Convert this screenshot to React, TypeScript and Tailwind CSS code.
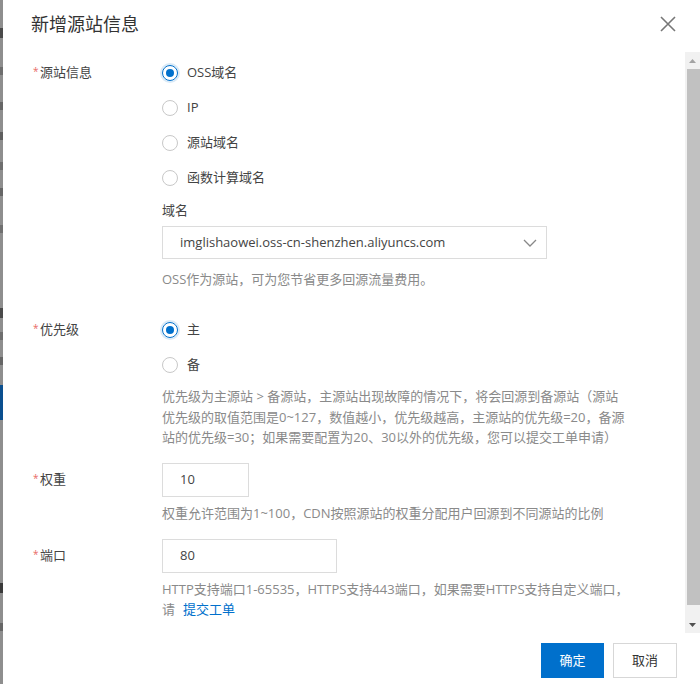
import React from "react";

function Req({ text }: { text: string }) {
  return (
    <span className="flex items-center text-[13px] text-[#333]">
      <span className="w-[7px] text-[10px] text-[#e86a66] leading-none -mt-[3px]">*</span>
      <span className="text-[#444]">{text}</span>
    </span>
  );
}

function Radio({ checked, label }: { checked?: boolean; label: string }) {
  return (
    <div className="h-[35px] flex items-center">
      {checked ? (
        <span className="w-[16px] h-[16px] rounded-full border border-[#0070cc] shadow-[0_0_0_2px_rgba(0,112,204,0.15)] flex items-center justify-center">
          <span className="w-[8px] h-[8px] rounded-full bg-[#0070cc]" />
        </span>
      ) : (
        <span className="w-[16px] h-[16px] rounded-full border border-[#c8c8c8] bg-white" />
      )}
      <span className="ml-[9px] text-[13px] text-[#444]">{label}</span>
    </div>
  );
}

function Mark({ cls }: { cls: string }) {
  return <div className={cls} />;
}

export default function App() {
  return (
    <div className="w-[700px] h-[684px] flex bg-white overflow-hidden font-['Open_Sans','Noto_Sans_CJK_SC',sans-serif]">
      {/* background page strip */}
      <div className="w-[3px] shrink-0 h-full bg-[#8e8e8e] flex flex-col">
        <Mark cls="mt-[28px] h-[10px] bg-[#4a4a4a]" />
        <Mark cls="mt-[29px] h-[8px] bg-[#6e6e6e]" />
        <Mark cls="mt-[27px] h-[8px] bg-[#666]" />
        <Mark cls="mt-[22px] h-[8px] bg-[#5e5e5e]" />
        <Mark cls="mt-[22px] h-[8px] bg-[#6e6e6e]" />
        <Mark cls="mt-[18px] h-[8px] bg-[#666]" />
        <Mark cls="mt-[29px] h-[8px] bg-[#707070]" />
        <Mark cls="mt-[75px] h-[10px] bg-[#4a4a4a]" />
        <Mark cls="mt-[14px] h-[8px] bg-[#6e6e6e]" />
        <Mark cls="mt-[17px] h-[8px] bg-[#666]" />
        <Mark cls="mt-[20px] h-[35px] bg-[#0b4f8f]" />
        <Mark cls="mt-[163px] h-[10px] bg-[#3a3a3a]" />
        <Mark cls="mt-[30px] h-[8px] bg-[#666]" />
      </div>

      {/* dialog */}
      <div className="flex-1 flex flex-col bg-white">
        {/* header */}
        <div className="h-[52px] shrink-0 flex items-center pl-[28px] pr-[24px]">
          <span className="text-[18px] text-[#333] leading-none -mt-[4px]">新增源站信息</span>
          <div className="flex-1" />
          <svg width="16" height="16" viewBox="0 0 16 16" className="-mt-[5px]">
            <path d="M1 1 L15 15 M15 1 L1 15" stroke="#777" strokeWidth="1.6" fill="none" />
          </svg>
        </div>

        {/* body */}
        <div className="h-[581px] shrink-0 flex">
          <div className="flex-1 overflow-hidden pl-[30px] pt-[3px]">
            {/* 源站信息 */}
            <div className="flex">
              <div className="w-[129px] shrink-0 h-[35px] flex items-center">
                <Req text="源站信息" />
              </div>
              <div className="flex flex-col">
                <Radio checked label="OSS域名" />
                <Radio label="IP" />
                <Radio label="源站域名" />
                <Radio label="函数计算域名" />
                <div className="mt-[5px] h-[20px] leading-[20px] text-[13px] text-[#444]">域名</div>
                <div className="mt-[6px] w-[385px] h-[33px] border border-[#dcdcdc] flex items-center pl-[17px] pr-[9px]">
                  <span className="flex-1 text-[13px] text-[#444]">imglishaowei.oss-cn-shenzhen.aliyuncs.com</span>
                  <svg width="14" height="8" viewBox="0 0 14 8">
                    <path d="M1 1 L7 7 L13 1" stroke="#888" strokeWidth="1.3" fill="none" />
                  </svg>
                </div>
                <div className="mt-[10px] h-[20px] leading-[20px] text-[13px] text-[#8a8a8a]">
                  OSS作为源站，可为您节省更多回源流量费用。
                </div>
              </div>
            </div>

            {/* 优先级 */}
            <div className="flex mt-[23px]">
              <div className="w-[129px] shrink-0 h-[35px] flex items-center">
                <Req text="优先级" />
              </div>
              <div className="flex flex-col">
                <Radio checked label="主" />
                <Radio label="备" />
                <div className="mt-[4px] text-[13px] leading-[20.5px] text-[#8a8a8a] whitespace-nowrap">
                  <div>优先级为主源站 &gt; 备源站，主源站出现故障的情况下，将会回源到备源站（源站</div>
                  <div>优先级的取值范围是0~127，数值越小，优先级越高，主源站的优先级=20，备源</div>
                  <div>站的优先级=30；如果需要配置为20、30以外的优先级，您可以提交工单申请）</div>
                </div>
              </div>
            </div>

            {/* 权重 */}
            <div className="flex mt-[15px]">
              <div className="w-[129px] shrink-0 h-[34px] flex items-center">
                <Req text="权重" />
              </div>
              <div className="flex flex-col">
                <div className="w-[87px] h-[34px] border border-[#dcdcdc] flex items-center pl-[17px] text-[13px] text-[#444]">
                  10
                </div>
                <div className="mt-[6px] h-[20px] leading-[20px] text-[13px] text-[#8a8a8a] whitespace-nowrap">
                  权重允许范围为1~100，CDN按照源站的权重分配用户回源到不同源站的比例
                </div>
              </div>
            </div>

            {/* 端口 */}
            <div className="flex mt-[16px]">
              <div className="w-[129px] shrink-0 h-[34px] flex items-center">
                <Req text="端口" />
              </div>
              <div className="flex flex-col">
                <div className="w-[175px] h-[34px] border border-[#dcdcdc] flex items-center pl-[17px] text-[13px] text-[#444]">
                  80
                </div>
                <div className="mt-[6px] text-[13px] leading-[20px] text-[#8a8a8a] whitespace-nowrap">
                  <div>HTTP支持端口1-65535，HTTPS支持443端口，如果需要HTTPS支持自定义端口，</div>
                  <div>
                    请<span className="ml-[8px] text-[#0070cc]">提交工单</span>
                  </div>
                </div>
              </div>
            </div>
          </div>

          {/* scrollbar */}
          <div className="w-[15px] shrink-0 bg-[#f1f1f1] flex flex-col">
            <div className="h-[17px] flex items-center justify-center">
              <svg width="7" height="4" viewBox="0 0 7 4">
                <path d="M0 4 L3.5 0 L7 4 Z" fill="#a3a3a3" />
              </svg>
            </div>
            <div className="h-[536px] ml-[2px] bg-[#c1c1c1]" />
            <div className="flex-1" />
            <div className="h-[17px] flex items-center justify-center">
              <svg width="7" height="4" viewBox="0 0 7 4">
                <path d="M0 0 L7 0 L3.5 4 Z" fill="#505050" />
              </svg>
            </div>
          </div>
        </div>

        {/* footer */}
        <div className="flex-1 flex justify-end items-start pt-[10px] pr-[23px] gap-[9px]">
          <button className="w-[63px] h-[35px] bg-[#0070cc] text-white text-[13px]">确定</button>
          <button className="w-[64px] h-[35px] bg-white border border-[#d7d7d7] text-[#333] text-[13px]">取消</button>
        </div>
      </div>
    </div>
  );
}
